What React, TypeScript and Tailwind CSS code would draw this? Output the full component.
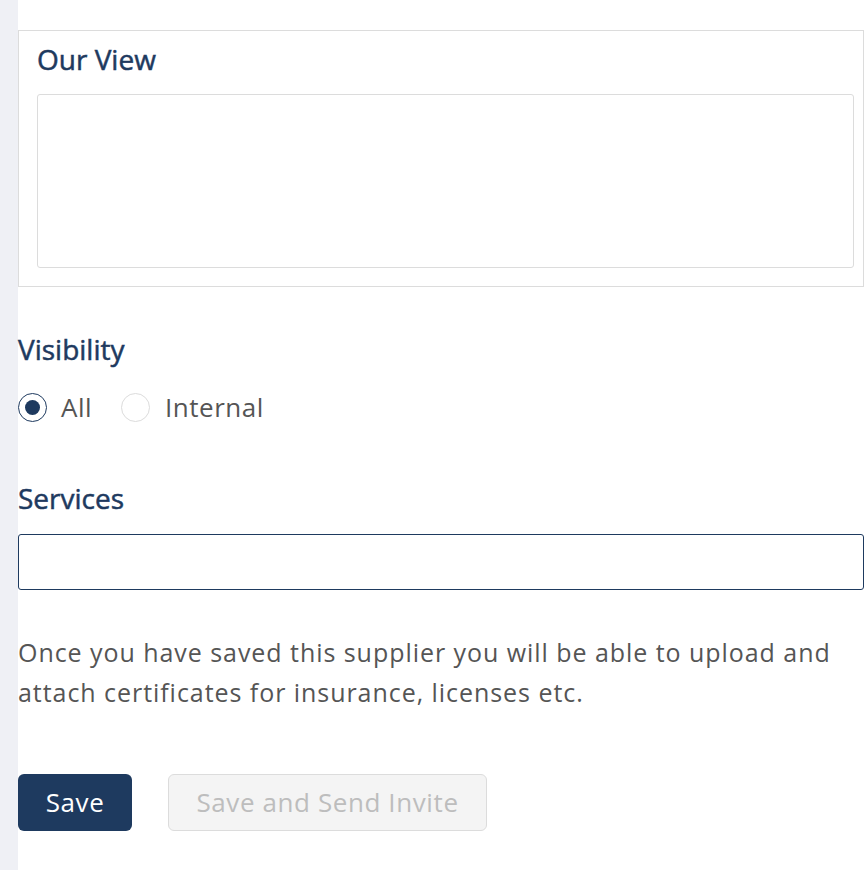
export default function App() {
  return (
    <div className="flex min-h-[870px] w-[864px] bg-white font-['Open_Sans',sans-serif]">
      <div className="w-[18px] shrink-0 bg-[#eff0f5]" />
      <div className="flex-1 pt-[30px]">
        {/* Our View card */}
        <div className="border border-[#dcdcdc] pl-[18px] pr-[9px] pt-[11px] pb-[18px]">
          <h3 className="text-[28px] font-medium leading-[34px] text-[#1e3a5f] [-webkit-text-stroke:0.5px_#1e3a5f]">Our View</h3>
          <textarea className="mt-[18px] block h-[174px] w-full resize-none rounded-[3px] border border-[#dcdcdc] outline-none" />
        </div>

        {/* Visibility */}
        <h3 className="mt-[45px] text-[28px] font-medium leading-[34px] text-[#1e3a5f] [-webkit-text-stroke:0.5px_#1e3a5f]">Visibility</h3>
        <div className="mt-[27px] flex items-center">
          <label className="flex items-center">
            <span className="flex h-[29px] w-[29px] items-center justify-center rounded-full border border-[#1e3a5f]">
              <span className="h-[15px] w-[15px] rounded-full bg-[#1e3a5f]" />
            </span>
            <span className="ml-[14px] text-[26px] leading-[29px] tracking-[0.5px] text-[#555]">All</span>
          </label>
          <label className="ml-[29px] flex items-center">
            <span className="h-[29px] w-[29px] rounded-full border border-[#dcdcdc]" />
            <span className="ml-[15px] text-[26px] leading-[29px] tracking-[0.5px] text-[#555]">Internal</span>
          </label>
        </div>

        {/* Services */}
        <h3 className="mt-[59px] text-[28px] font-medium leading-[34px] text-[#1e3a5f] [-webkit-text-stroke:0.5px_#1e3a5f]">Services</h3>
        <input className="mt-[19px] block h-[56px] w-full rounded-[3px] border border-[#1e3a5f] outline-none" />

        <p className="mt-[42px] text-[25px] leading-[40px] tracking-[0.95px] text-[#555]">
          Once you have saved this supplier you will be able to upload and attach certificates for insurance, licenses etc.
        </p>

        <div className="mt-[62px] flex gap-[36px]">
          <button className="h-[57px] w-[114px] rounded-[6px] bg-[#1e3a5f] text-[26px] tracking-[0.6px] text-white">Save</button>
          <button className="h-[57px] w-[319px] rounded-[6px] border border-[#dcdcdc] bg-[#f4f4f4] text-[26px] tracking-[0.6px] text-[#bdbdbd]">
            Save and Send Invite
          </button>
        </div>
      </div>
    </div>
  );
}
